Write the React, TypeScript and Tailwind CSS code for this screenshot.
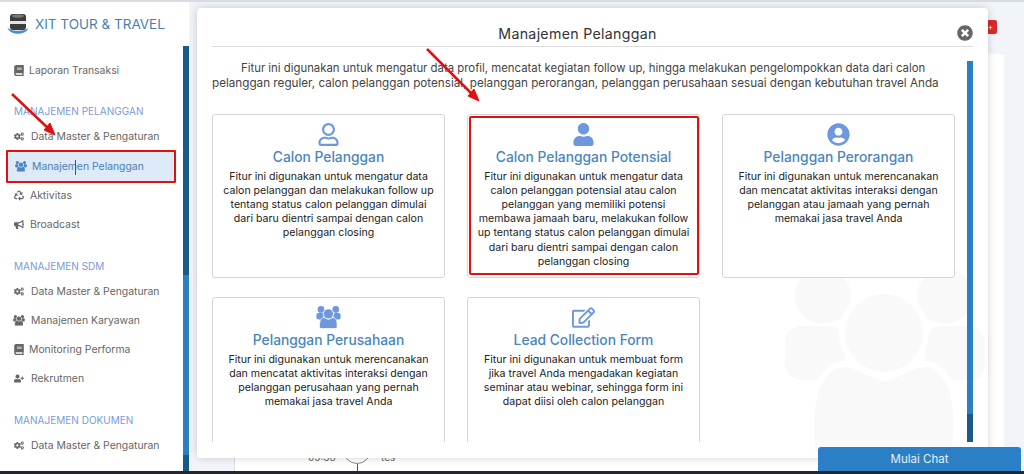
import type { ReactNode } from 'react';
import { FaBook, FaBullhorn, FaCogs, FaRecycle, FaRegEdit, FaRegUser, FaTimesCircle, FaUser, FaUserCircle, FaUserPlus } from 'react-icons/fa';

function UsersIcon({ className }: { className?: string }) {
  return (
    <svg className={className} viewBox="0 0 200 190" fill="currentColor">
      <circle cx="38" cy="28" r="28" />
      <circle cx="160" cy="28" r="28" />
      <rect x="0" y="58" width="60" height="54" rx="16" />
      <rect x="140" y="58" width="60" height="54" rx="16" />
      <circle cx="99" cy="65" r="45" fill="#fff" />
      <circle cx="99" cy="65" r="39" />
      <path d="M28 186 C20 130 36 96 60 96 C74 96 86 110 99 110 C112 110 126 96 140 96 C162 96 178 130 169 186 Z" stroke="#fff" strokeWidth="6" />
    </svg>
  );
}

interface NavItemProps {
  icon: ReactNode;
  label: string;
  gap?: string;
}

function NavItem({ icon, label, gap = 'gap-[7px]' }: NavItemProps) {
  return (
    <div className={`flex items-center h-[29px] pl-[14px] text-[#666] text-[10.4px] ${gap}`}>
      <span className="text-[#666] text-[11px] w-[10px] flex justify-center">{icon}</span>
      <span>{label}</span>
    </div>
  );
}

function SectionTitle({ children, className }: { children: ReactNode; className: string }) {
  return <div className={`pl-[14px] text-[10px] leading-[16px] tracking-[0.02px] text-[#7b9bd6] ${className}`}>{children}</div>;
}

interface FeatureCardProps {
  icon: ReactNode;
  title: string;
  lines: string[];
  selected?: boolean;
}

function FeatureCard({ icon, title, lines, selected }: FeatureCardProps) {
  return (
    <div className="relative h-[164px] bg-white border border-[#d5d5d5] rounded-[3px] flex flex-col items-center pt-[8px]">
      <div className="h-[23px] flex items-center justify-center text-[#6f98dc] text-[23px]">{icon}</div>
      <div className="mt-[1px] text-[#4a86bd] text-[13.8px] leading-[20px] font-medium">{title}</div>
      <div className="mt-[3px] text-[#222] text-[10.6px] leading-[14.2px] text-center">
        {lines.map((line) => (
          <div key={line}>{line}</div>
        ))}
      </div>
      {selected && (
        <div className="absolute left-[1px] right-0 top-[1px] bottom-[2px] border-2 border-[#e01010] rounded-[2px]" />
      )}
    </div>
  );
}

export default function App() {
  return (
    <div className="relative h-[474px] w-full overflow-hidden flex flex-col bg-[#f1f5fa] font-['Inter','Liberation_Sans',sans-serif]">
      <div className="h-[2px] shrink-0 bg-[#d8dce3]" />
      <div className="flex flex-1 min-h-0">
        {/* Sidebar */}
        <div className="w-[183px] shrink-0 bg-white overflow-hidden">
          <div className="h-[44px] flex items-center pl-[7px] gap-[6px]">
            <svg width="22" height="22" viewBox="0 0 22 22">
              <path d="M0.5 14 C1 23 21 23 21.5 14 C20 19 2 19 0.5 14 Z" fill="#4a90d0" />
              <rect x="3" y="1" width="16" height="16" rx="3" fill="#3d3d3d" />
              <rect x="3" y="8" width="16" height="3" fill="#e4e4e4" />
              <ellipse cx="11" cy="3" rx="6" ry="1.8" fill="#777" />
            </svg>
            <span className="text-[#4a7fb5] text-[13.5px] leading-[20px]">XIT TOUR &amp; TRAVEL</span>
          </div>
          <div className="mt-[10px]">
            <NavItem icon={<FaBook />} label="Laporan Transaksi" gap="gap-[5px]" />
          </div>
          <SectionTitle className="mt-[18px] mb-[3px]">MANAJEMEN PELANGGAN</SectionTitle>
          <NavItem icon={<FaCogs />} label="Data Master & Pengaturan" />
          <div className="relative flex items-center h-[33px] -mt-[1px] ml-[6px] mr-[7px] pl-[7px] gap-[5px] bg-[#deeaf8] text-[#4a7fb5] text-[10.4px] border-2 border-[#e01010] rounded-[1px]">
            <UsersIcon className="w-[12px] h-[11px] text-[#4a86c5]" />
            <span>Manajemen Pelanggan</span>
            <span className="absolute left-[67px] top-[8px] h-[15px] w-px bg-[#2a5a90]" />
          </div>
          <div className="-mt-[2px]">
            <NavItem icon={<FaRecycle />} label="Aktivitas" gap="gap-[6px]" />
            <NavItem icon={<FaBullhorn />} label="Broadcast" gap="gap-[6px]" />
          </div>
          <SectionTitle className="mt-[19px] mb-[3px]">MANAJEMEN SDM</SectionTitle>
          <NavItem icon={<FaCogs />} label="Data Master & Pengaturan" />
          <NavItem icon={<UsersIcon className="w-[12px] h-[11px] shrink-0" />} label="Manajemen Karyawan" />
          <NavItem icon={<FaBook />} label="Monitoring Performa" gap="gap-[5px]" />
          <NavItem icon={<FaUserPlus />} label="Rekrutmen" />
          <SectionTitle className="mt-[19px] mb-[3px]">MANAJEMEN DOKUMEN</SectionTitle>
          <NavItem icon={<FaCogs />} label="Data Master & Pengaturan" />
        </div>
        {/* Sidebar scrollbar */}
        <div className="w-[6px] shrink-0 flex flex-col pt-[44px] bg-white">
          <div className="h-[229px] bg-[#1a5a88]" />
          <div className="h-[180px] bg-[#2b7fc3]" />
          <div className="flex-1 bg-[#1a5a88]" />
        </div>
        {/* Page behind the modal */}
        <div className="flex-1 flex pl-[45px] pr-[20px] pt-[52px]">
          <div className="flex-1 bg-white border-l border-[#ddd] rounded-t-[3px] flex flex-col justify-end overflow-hidden">
            <div className="flex items-end h-[26px] pl-[73px] text-[#666] text-[10px]">
              <span className="mb-[6px] w-[35px]">05:36</span>
              <div className="flex flex-col items-center w-[28px]">
                <span className="w-[28px] h-[28px] rounded-full border border-[#888]" />
                <span className="w-px h-[7px] bg-[#555]" />
              </div>
              <span className="mb-[6px] ml-[10px]">tes</span>
            </div>
          </div>
        </div>
      </div>
      <div className="h-[3px] shrink-0 bg-[#23272b]" />

      {/* Badge behind the modal */}
      <div className="absolute left-[980px] top-[20px] w-[17px] h-[14px] bg-[#d92a2a] rounded-[2px] text-white text-[8px] leading-[14px] text-right pr-[4px]">+</div>

      {/* Modal */}
      <div className="absolute left-[197px] top-[8px] w-[791px] h-[450px] bg-white rounded-[4px] shadow-[0_0_8px_rgba(0,0,0,0.18)] px-[15px] overflow-hidden">
        <UsersIcon className="absolute left-[588px] top-[260px] w-[200px] h-[190px] text-[#f9f9f9]" />
        <div className="relative h-[39px] border-b border-[#ddd] flex items-center justify-center pt-[14px] pr-[30px] text-[#333] text-[14.2px] tracking-[0.3px]">
          <span>Manajemen Pelanggan</span>
          <FaTimesCircle className="absolute right-0 top-[17px] text-[#666] text-[16px]" />
        </div>
        <div className="relative flex h-[395px] overflow-hidden">
          <div className="flex-1 min-w-0">
            <div className="pt-[14px] text-[#444] leading-[15.3px]">
              <div className="ml-[29px] text-[11.37px]">Fitur ini digunakan untuk mengatur data profil, mencatat kegiatan follow up, hingga melakukan pengelompokkan data dari calon</div>
              <div className="text-[11.7px]">pelanggan reguler, calon pelanggan potensial, pelanggan perorangan, pelanggan perusahaan sesuai dengan kebutuhan travel Anda</div>
            </div>
            <div className="grid grid-cols-[233px_233px_233px] gap-x-[22px] gap-y-[19px] mt-[22px]">
              <FeatureCard
                icon={<FaRegUser />}
                title="Calon Pelanggan"
                lines={['Fitur ini digunakan untuk mengatur data', 'calon pelanggan dan melakukan follow up', 'tentang status calon pelanggan dimulai', 'dari baru dientri sampai dengan calon', 'pelanggan closing']}
              />
              <FeatureCard
                selected
                icon={<FaUser />}
                title="Calon Pelanggan Potensial"
                lines={['Fitur ini digunakan untuk mengatur data', 'calon pelanggan potensial atau calon', 'pelanggan yang memiliki potensi', 'membawa jamaah baru, melakukan follow', 'up tentang status calon pelanggan dimulai', 'dari baru dientri sampai dengan calon', 'pelanggan closing']}
              />
              <FeatureCard
                icon={<FaUserCircle />}
                title="Pelanggan Perorangan"
                lines={['Fitur ini digunakan untuk merencanakan', 'dan mencatat aktivitas interaksi dengan', 'pelanggan atau jamaah yang pernah', 'memakai jasa travel Anda']}
              />
              <FeatureCard
                icon={<UsersIcon className="w-[25px] h-[23px]" />}
                title="Pelanggan Perusahaan"
                lines={['Fitur ini digunakan untuk merencanakan', 'dan mencatat aktivitas interaksi dengan', 'pelanggan perusahaan yang pernah', 'memakai jasa travel Anda']}
              />
              <FeatureCard
                icon={<FaRegEdit />}
                title="Lead Collection Form"
                lines={['Fitur ini digunakan untuk membuat form', 'jika travel Anda mengadakan kegiatan', 'seminar atau webinar, sehingga form ini', 'dapat diisi oleh calon pelanggan']}
              />
            </div>
          </div>
          {/* Modal scrollbar */}
          <div className="w-[6px] shrink-0 flex flex-col mt-[14px]">
            <div className="h-[353px] bg-[#2b7fc3]" />
            <div className="h-[28px] bg-[#1a5a88]" />
          </div>
        </div>
      </div>

      {/* Chat button */}
      <div className="absolute left-[818px] top-[447px] w-[203px] h-[24px] pt-[1px] bg-[#2b7fc7] rounded-t-[3px] flex items-center justify-center text-[#e6f0fa] text-[11.5px]">
        Mulai Chat
      </div>

      {/* Annotation arrows */}
      <svg className="absolute left-0 top-0 pointer-events-none" width="1024" height="474" fill="#e01010" stroke="#e01010">
        <line x1="12" y1="94" x2="50" y2="130" strokeWidth="2.5" />
        <polygon points="55,135 44,130 50,123" strokeWidth="1" />
        <line x1="427" y1="49" x2="474" y2="96" strokeWidth="2.5" />
        <polygon points="479,101 468,96 474,89" strokeWidth="1" />
      </svg>
    </div>
  );
}
